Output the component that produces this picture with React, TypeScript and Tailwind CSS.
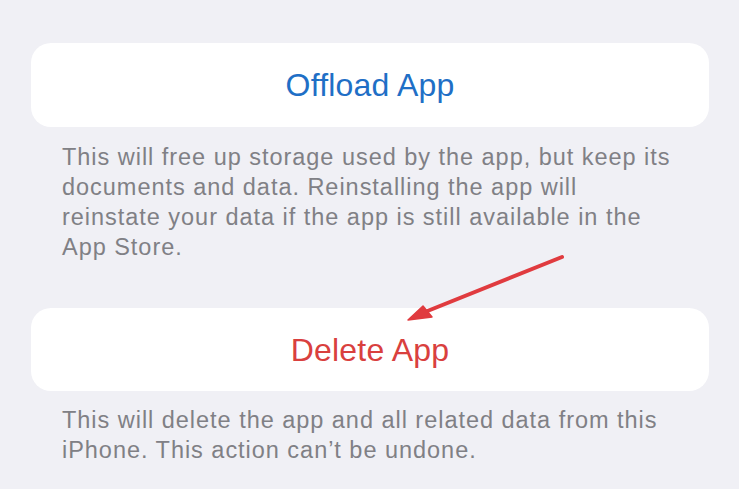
import React from "react";

export default function App() {
  return (
    <div
      className="relative w-[739px] h-[489px] overflow-hidden bg-[#f0f0f5] pt-[43px] pl-[31px] pr-[30px]"
      style={{ fontFamily: '"Liberation Sans", Arial, sans-serif' }}
    >
      <div className="h-[84px] rounded-[20px] bg-white flex items-center justify-center">
        <span className="text-[32px] leading-none tracking-[0.2px] text-[#1f6fc6]">Offload App</span>
      </div>
      <p className="mt-[15px] pl-[31px] text-[23.5px] leading-[30px] text-[#808085] whitespace-nowrap tracking-[0.97px]">
        This will free up storage used by the app, but keep its
        <br />
        documents and data. Reinstalling the app will
        <br />
        reinstate your data if the app is still available in the
        <br />
        App Store.
      </p>
      <div className="mt-[46px] h-[83px] rounded-[20px] bg-white flex items-center justify-center">
        <span className="text-[32px] leading-none tracking-[0.2px] text-[#d9403e]">Delete App</span>
      </div>
      <p className="mt-[14px] pl-[31px] text-[23.5px] leading-[30px] text-[#808085] whitespace-nowrap tracking-[0.97px]">
        This will delete the app and all related data from this
        <br />
        iPhone. This action can’t be undone.
      </p>
      <svg
        className="absolute left-0 top-0 pointer-events-none"
        width="739"
        height="489"
        viewBox="0 0 739 489"
      >
        <line x1="562" y1="257" x2="420" y2="314" stroke="#e03b3f" strokeWidth="4" strokeLinecap="round" />
        <polygon points="408,320 423,306 432,317" fill="#e03b3f" stroke="#e03b3f" strokeWidth="1.5" strokeLinejoin="round" />
      </svg>
    </div>
  );
}
